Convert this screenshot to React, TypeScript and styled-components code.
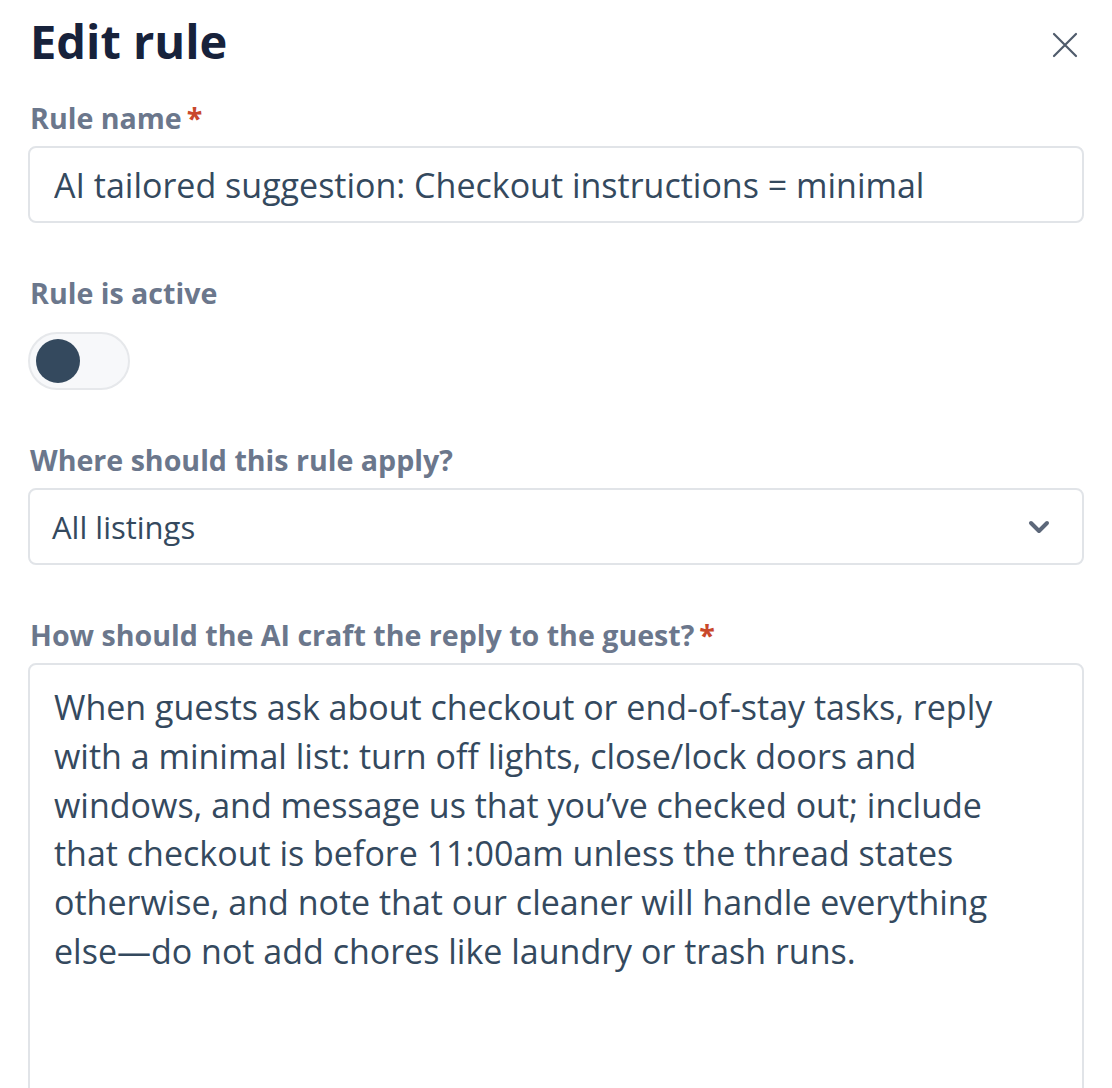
import { useState } from "react";
import styled, { createGlobalStyle } from "styled-components";

const GlobalStyle = createGlobalStyle`
    * {
        box-sizing: border-box;
    }

    body {
        margin: 0;
        background: #ffffff;
        font-family: "Open Sans", "Noto Sans", sans-serif;
    }
`;

const REPLY_TEXT =
    "When guests ask about checkout or end-of-stay tasks, reply with a minimal list: turn off lights, close/lock doors and windows, and message us that you\u2019ve checked out; include that checkout is before 11:00am unless the thread states otherwise, and note that our cleaner will handle everything else\u2014do not add chores like laundry or trash runs.";

const CloseIcon = () => (
    <svg width="26" height="26" viewBox="0 0 26 26" fill="none">
        <path
            d="M2 2L24 24M24 2L2 24"
            stroke="#4f5b6b"
            strokeWidth="2.2"
            strokeLinecap="round"
        />
    </svg>
);

const ChevronIcon = () => (
    <svg width="22" height="14" viewBox="0 0 22 14" fill="none">
        <path
            d="M3 3L11 11L19 3"
            stroke="#5c6779"
            strokeWidth="4"
            strokeLinecap="round"
            strokeLinejoin="round"
        />
    </svg>
);

export default function App() {
    const [active, setActive] = useState(false);

    return (
        <>
            <GlobalStyle />
            <Container>
                <Header>
                    <Title>Edit rule</Title>
                    <CloseButton aria-label="Close">
                        <CloseIcon />
                    </CloseButton>
                </Header>

                <Field>
                    <Label>
                        Rule name<Required>*</Required>
                    </Label>
                    <Input defaultValue="AI tailored suggestion: Checkout instructions = minimal" />
                </Field>

                <Field>
                    <Label>Rule is active</Label>
                    <Toggle
                        $on={active}
                        onClick={() => setActive((v) => !v)}
                        aria-pressed={active}
                    >
                        <Knob $on={active} />
                    </Toggle>
                </Field>

                <Field>
                    <Label>Where should this rule apply?</Label>
                    <Select>
                        <span>All listings</span>
                        <ChevronIcon />
                    </Select>
                </Field>

                <Field>
                    <Label>
                        How should the AI craft the reply to the guest?
                        <Required>*</Required>
                    </Label>
                    <TextArea defaultValue={REPLY_TEXT} />
                </Field>
            </Container>
        </>
    );
}

const Container = styled.div`
    width: 100%;

    display: flex;
    flex-direction: column;
    gap: 52px;

    padding: 13px 28px 0 28px;
`;

const Header = styled.div`
    display: flex;
    flex-direction: row;
    align-items: center;
    justify-content: space-between;

    margin-bottom: -21px;
`;

const Title = styled.h1`
    margin: 0;
    padding-left: 2px;

    color: #17223b;
    font-size: 47px;
    font-weight: 700;
    line-height: 56px;
`;

const CloseButton = styled.button`
    display: flex;
    align-items: center;
    justify-content: center;

    padding: 0;
    margin-top: 8px;
    margin-right: 6px;

    background: none;
    border: none;
    cursor: pointer;
`;

const Field = styled.div`
    display: flex;
    flex-direction: column;
    align-items: flex-start;
    gap: 10px;
`;

const Label = styled.label`
    padding-left: 2px;

    color: #6b778c;
    font-size: 28.6px;
    font-weight: 700;
    line-height: 36px;
`;

const Required = styled.span`
    margin-left: 5px;
    color: #c9482b;
`;

const Input = styled.input`
    width: 100%;
    height: 77px;

    padding: 0 24px;

    color: #34495e;
    font-family: inherit;
    font-size: 34px;

    background: #ffffff;
    border: 2px solid #e1e4e8;
    border-radius: 8px;
    outline: none;
`;

const Toggle = styled.button<{ $on: boolean }>`
    width: 102px;
    height: 58px;

    display: flex;
    align-items: center;

    padding: 0 6px;
    margin-top: 11px;

    background: ${({ $on }) => ($on ? "#34495e" : "#f7f8fa")};
    border: 2px solid #e6e8eb;
    border-radius: 29px;
    cursor: pointer;
`;

const Knob = styled.span<{ $on: boolean }>`
    width: 44px;
    height: 44px;

    border-radius: 50%;
    background: ${({ $on }) => ($on ? "#ffffff" : "#34495e")};

    transform: translateX(${({ $on }) => ($on ? "42px" : "0")});
    transition: transform 150ms;
`;

const Select = styled.div`
    width: 100%;
    height: 77px;

    display: flex;
    align-items: center;
    justify-content: space-between;

    padding: 0 32px 0 22px;

    color: #34495e;
    font-size: 31px;

    background: #ffffff;
    border: 2px solid #e1e4e8;
    border-radius: 8px;
    cursor: pointer;
`;

const TextArea = styled.textarea`
    width: 100%;
    height: 520px;

    padding: 18px 40px 18px 24px;

    color: #34495e;
    font-family: inherit;
    font-size: 34px;
    line-height: 48.8px;

    background: #ffffff;
    border: 2px solid #e1e4e8;
    border-radius: 8px;
    outline: none;
    resize: none;
`;
